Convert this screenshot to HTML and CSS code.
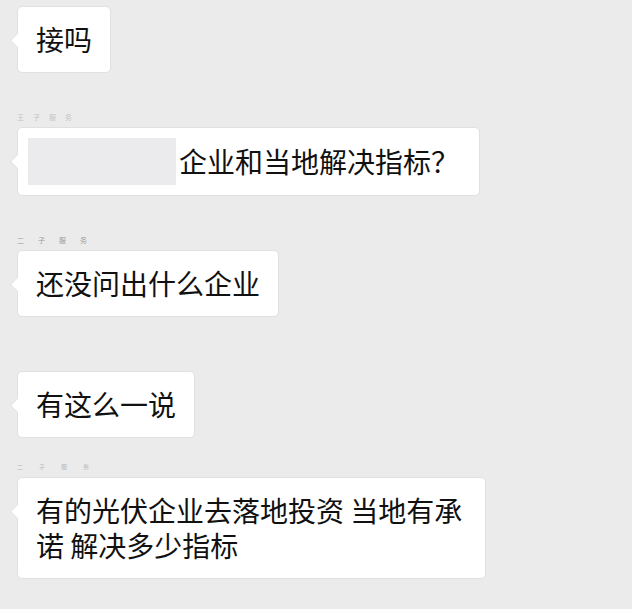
FILE: index.html
```html
<!DOCTYPE html>
<html lang="zh-CN">
<head>
<meta charset="utf-8">
<title>聊天记录</title>
<link rel="stylesheet" href="styles.css">
</head>
<body>
<div class="chat">
  <div class="msg msg--first">
    <div class="bubble">接吗</div>
  </div>
  <div class="msg">
    <div class="name name--light">王子服务</div>
    <div class="bubble bubble--media"><span class="redact"></span><span>企业和当地解决指标？</span></div>
  </div>
  <div class="msg">
    <div class="name">二子服务</div>
    <div class="bubble">还没问出什么企业</div>
  </div>
  <div class="msg">
    <div class="name"></div>
    <div class="bubble">有这么一说</div>
  </div>
  <div class="msg msg--close">
    <div class="name name--thin">二子服务</div>
    <div class="bubble bubble--wide">有的光伏企业去落地投资 当地有承诺 解决多少指标</div>
  </div>
</div>
</body>
</html>
```

FILE: styles.css
```css
html, body {
  margin: 0;
  padding: 0;
  background: #ebebeb;
}

body {
  width: 632px;
  height: 609px;
  overflow: hidden;
  font-family: "Noto Sans CJK SC", "Noto Sans", sans-serif;
}

.chat {
  padding: 6px 0 0 17px;
  display: flex;
  flex-direction: column;
}

.msg {
  display: flex;
  flex-direction: column;
  align-items: flex-start;
  gap: 6px;
  margin-top: 40px;
}

.msg--first {
  margin-top: 0;
}

.msg--close {
  margin-top: 25px;
}

.name {
  height: 8px;
  font-size: 7px;
  line-height: 8px;
  letter-spacing: 14px;
  color: #9a9a9a;
}

.name--light {
  color: #c4c4c4;
  letter-spacing: 9px;
}

.name--thin {
  color: #b8b8b8;
  font-size: 6px;
  letter-spacing: 16px;
}

.bubble {
  position: relative;
  background: #ffffff;
  border: 1px solid #e0e0e0;
  border-radius: 5px;
  padding: 15px 18px;
  font-size: 28px;
  line-height: 35px;
  color: #111111;
}

.bubble::before {
  content: "";
  position: absolute;
  left: -6px;
  top: 28px;
  width: 10px;
  height: 10px;
  background: #ffffff;
  border-left: 1px solid #e0e0e0;
  border-bottom: 1px solid #e0e0e0;
  transform: rotate(45deg);
}

.bubble--media {
  display: flex;
  align-items: center;
  gap: 3px;
  padding: 10px 20px 10px 10px;
}

.redact {
  display: block;
  width: 148px;
  height: 47px;
  background: #ebebed;
}

.bubble--wide {
  max-width: 431px;
}
```
